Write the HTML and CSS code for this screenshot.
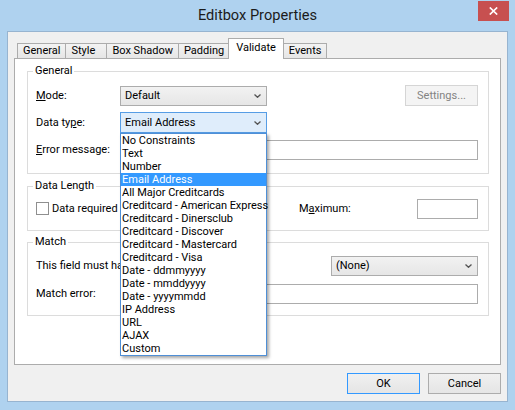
FILE: index.html
```html
<!DOCTYPE html>
<html>
<head>
<meta charset="utf-8">
<title>Editbox Properties</title>
<link rel="stylesheet" href="styles.css">
</head>
<body>
<div class="window">
  <div class="titlebar">
    <span class="title">Editbox Properties</span>
    <span class="close"><svg width="9" height="8" viewBox="0 0 9 8"><path d="M0.8 0.5 L8.2 7.5 M8.2 0.5 L0.8 7.5" stroke="#fff" stroke-width="1.7" fill="none"/></svg></span>
  </div>
  <div class="client">
    <div class="tabs">
      <div class="tab">General</div>
      <div class="tab">Style</div>
      <div class="tab">Box Shadow</div>
      <div class="tab">Padding</div>
      <div class="tab active">Validate</div>
      <div class="tab">Events</div>
    </div>
    <div class="panel">
      <fieldset class="group group-general">
        <legend>General</legend>
        <div class="row">
          <span class="lbl"><u>M</u>ode:</span>
          <div class="select select-short"><span>Default</span><svg class="chev" width="7" height="4" viewBox="0 0 7 4"><path d="M0.5 0.5 L3.5 3.3 L6.5 0.5" fill="none" stroke="#555" stroke-width="1.3"/></svg></div>
          <button class="btn btn-disabled settings">Settings...</button>
        </div>
        <div class="row row-gap">
          <span class="lbl">Data ty<u>p</u>e:</span>
          <div class="combo">
            <div class="select select-focus"><span>Email Address</span><svg class="chev" width="7" height="4" viewBox="0 0 7 4"><path d="M0.5 0.5 L3.5 3.3 L6.5 0.5" fill="none" stroke="#555" stroke-width="1.3"/></svg></div>
            <div class="droplist">
              <div class="opt">No Constraints</div>
              <div class="opt">Text</div>
              <div class="opt">Number</div>
              <div class="opt sel">Email Address</div>
              <div class="opt">All Major Creditcards</div>
              <div class="opt opt-tight">Creditcard - American Express</div>
              <div class="opt">Creditcard - Dinersclub</div>
              <div class="opt">Creditcard - Discover</div>
              <div class="opt">Creditcard - Mastercard</div>
              <div class="opt">Creditcard - Visa</div>
              <div class="opt">Date - ddmmyyyy</div>
              <div class="opt">Date - mmddyyyy</div>
              <div class="opt">Date - yyyymmdd</div>
              <div class="opt">IP Address</div>
              <div class="opt">URL</div>
              <div class="opt">AJAX</div>
              <div class="opt">Custom</div>
            </div>
          </div>
        </div>
        <div class="row row-gap">
          <span class="lbl"><u>E</u>rror message:</span>
          <div class="input input-wide"></div>
        </div>
      </fieldset>

      <fieldset class="group group-length">
        <legend>Data Length</legend>
        <div class="row">
          <span class="checkbox"></span>
          <span class="check-text">Data required</span>
          <span class="max-label">M<u>a</u>ximum:</span>
          <div class="input input-small"></div>
        </div>
      </fieldset>

      <fieldset class="group group-match">
        <legend>Match</legend>
        <div class="row">
          <span class="lbl-long">This field must have the same value as:</span>
          <div class="select select-short select-right"><span>(None)</span><svg class="chev" width="7" height="4" viewBox="0 0 7 4"><path d="M0.5 0.5 L3.5 3.3 L6.5 0.5" fill="none" stroke="#555" stroke-width="1.3"/></svg></div>
        </div>
        <div class="row row-gap7">
          <span class="lbl">Match error:</span>
          <div class="input input-wide"></div>
        </div>
      </fieldset>
    </div>
    <div class="footer">
      <button class="btn btn-default">OK</button>
      <button class="btn">Cancel</button>
    </div>
  </div>
</div>
</body>
</html>
```

FILE: styles.css
```css
* { box-sizing: border-box; }

body {
  margin: 0;
  font-family: Roboto, "Segoe UI", "Liberation Sans", sans-serif;
  font-size: 11px;
  color: #000;
  background: #fff;
}

.window {
  width: 515px;
  height: 410px;
  background: #afd2ef;
  display: flex;
  flex-direction: column;
}

.titlebar {
  height: 31px;
  flex: none;
  display: grid;
  grid-template-columns: 1fr auto 1fr;
  align-items: start;
}

.title {
  grid-column: 2;
  font-size: 14.6px;
  line-height: 31px;
  color: #1b1b1b;
}

.close {
  grid-column: 3;
  justify-self: end;
  width: 31px;
  height: 20px;
  margin-top: 1px;
  margin-right: 6px;
  background: #c75050;
  display: flex;
  align-items: center;
  justify-content: center;
}

.client {
  margin: 0 7px 8px 7px;
  height: 371px;
  background: #f0f0f0;
  border: 1px solid #97b4d0;
  display: flex;
  flex-direction: column;
}

.tabs {
  display: flex;
  align-items: flex-end;
  height: 26px;
  padding: 6px 0 0 9px;
  flex: none;
}

.tab {
  height: 15px;
  min-width: 42px;
  line-height: 14px;
  padding: 0 5px;
  border: 1px solid #acacac;
  border-bottom: none;
  margin-right: -1px;
  background: linear-gradient(#f3f3f3, #e6e6e6);
  white-space: nowrap;
}

.tab.active {
  height: 21px;
  line-height: 17px;
  padding: 0 7px;
  margin-left: -1px;
  background: #fff;
  margin-bottom: -1px;
  position: relative;
  z-index: 1;
}

.panel {
  position: relative;
  margin-left: 6px;
  width: 487px;
  height: 307px;
  flex: none;
  background: #fff;
  border: 1px solid #acacac;
  padding: 5px 11px 0 12px;
}

.group {
  margin: 0;
  padding: 0 10px 0 8px;
  border: 1px solid #dcdcdc;
  min-width: 0;
}

.group legend {
  margin-left: -3px;
  padding: 0 2px;
  line-height: 14px;
  font-size: 11px;
}

.group-general { padding-top: 7px; padding-bottom: 13px; }
.group-length { margin-top: 5px; padding-top: 5px; padding-bottom: 11px; }
.group-match { margin-top: 4px; padding-top: 6px; padding-bottom: 11px; }

.row {
  display: flex;
  align-items: center;
  height: 21px;
}

.row-gap { margin-top: 6px; }
.row-gap7 { margin-top: 7px; }

.lbl {
  width: 84px;
  flex: none;
  white-space: nowrap;
}

.lbl-long {
  width: 84px;
  flex: none;
  white-space: nowrap;
  overflow: hidden;
}

.select {
  width: 147px;
  height: 20px;
  flex: none;
  display: flex;
  align-items: center;
  justify-content: space-between;
  padding: 0 5px 0 4px;
  border: 1px solid #acacac;
  background: linear-gradient(#f2f2f2, #e6e6e6);
}

.select-right { margin-left: auto; }

.select-focus {
  height: 21px;
  border-color: #569de5;
  background: #dfedfb;
}

.chev { flex: none; }

.combo {
  position: relative;
  width: 147px;
  height: 21px;
  flex: none;
}

.droplist {
  position: absolute;
  left: 0;
  top: 100%;
  width: 147px;
  border: 1px solid #4f8fd6;
  background: #fff;
  box-shadow: 2px 2px 3px rgba(0, 0, 0, 0.35);
  z-index: 5;
}

.opt {
  height: 13px;
  line-height: 13px;
  padding-left: 1px;
  white-space: nowrap;
}

.opt-tight { letter-spacing: -0.05px; }

.opt.sel {
  background: #3399ff;
  color: #fff;
}

.input {
  height: 20px;
  border: 1px solid #acacac;
  background: #fff;
}

.input-wide { flex: 1; }

.input-small { width: 61px; flex: none; }

.checkbox {
  width: 13px;
  height: 13px;
  flex: none;
  border: 1px solid #8f8f8f;
  background: #fff;
  margin-right: 3px;
}

.check-text { white-space: nowrap; }

.max-label {
  margin-left: auto;
  width: 118px;
  flex: none;
  white-space: nowrap;
}

.btn {
  font-family: inherit;
  font-size: 11px;
  color: #000;
  width: 73px;
  height: 21px;
  padding: 0;
  border: 1px solid #acacac;
  background: linear-gradient(#f0f0f0, #e5e5e5);
  border-radius: 0;
}

.settings { margin-left: auto; }

.btn-disabled {
  color: #838383;
  border-color: #d5d5d5;
  background: #f4f4f4;
}

.btn-default {
  border-color: #3399ff;
}

.footer {
  display: flex;
  justify-content: flex-end;
  gap: 8px;
  padding: 8px 6px 0 0;
}
```
